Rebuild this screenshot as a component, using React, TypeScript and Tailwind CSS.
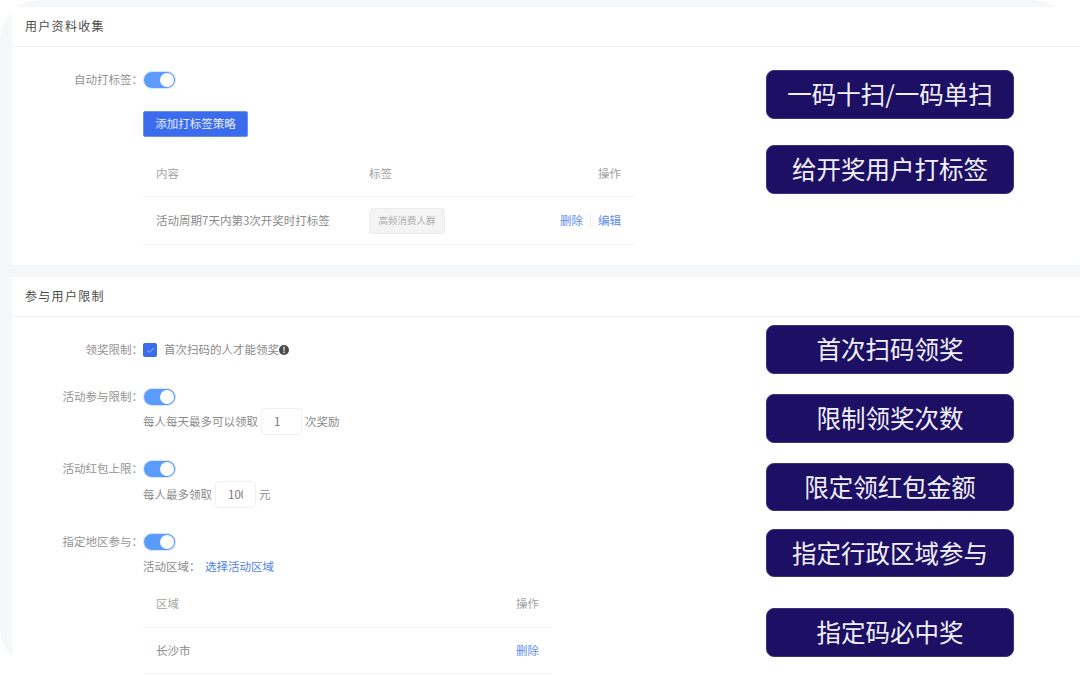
import React from 'react';
import { Check } from 'lucide-react';

const font = "font-['PingFang_SC','Noto_Sans_CJK_SC',sans-serif]";

const Toggle = () => (
  <div className="flex h-[18px] w-[33px] items-center justify-end rounded-full border border-[#d5e4fe] bg-[#5b9bfb] pr-[1px]">
    <div className="h-[14px] w-[14px] rounded-full bg-white" />
  </div>
);

const CardHeader = ({ title }: { title: string }) => (
  <div className="flex h-[40px] items-center border-b border-[#f0f1f3] pb-[2px] pl-[13px] text-[12px] tracking-[1.3px] text-[#4a4a4a]">
    {title}
  </div>
);

const Label = ({ text }: { text: string }) => (
  <span className="w-[131px] shrink-0 whitespace-nowrap text-right text-[11.5px] text-[#939393]">{text}：</span>
);

const NumberBox = ({ value }: { value: string }) => (
  <div className="flex h-[27px] w-[41px] items-center rounded-[4px] border border-[#eef0f2] pl-[12px] text-[11.5px] text-[#777]">
    <span className="w-[15px] overflow-hidden whitespace-nowrap">{value}</span>
  </div>
);

const notes = [
  { text: '一码十扫/一码单扫', margin: 'mt-[70px] h-[49px]' },
  { text: '给开奖用户打标签', margin: 'mt-[26px] h-[49px]' },
  { text: '首次扫码领奖', margin: 'mt-[131px] h-[49px]' },
  { text: '限制领奖次数', margin: 'mt-[20px] h-[49px]' },
  { text: '限定领红包金额', margin: 'mt-[20px] h-[48px]' },
  { text: '指定行政区域参与', margin: 'mt-[18px] h-[48px]' },
  { text: '指定码必中奖', margin: 'mt-[31px] h-[49px]' },
];

export default function App() {
  return (
    <div className={`relative h-[677px] w-[1080px] overflow-hidden bg-white ${font}`}>
      <div className="h-[668px] w-[1080px] rounded-tl-[40px] rounded-tr-[50px] rounded-bl-[40px] bg-[#f5f7f9] pl-[12px] pt-[7px]">
        {/* 用户资料收集 */}
        <div className="h-[258px] w-[1068px] bg-white">
          <CardHeader title="用户资料收集" />
          <div className="mt-[24px] flex h-[18px] items-center">
            <Label text="自动打标签" />
            <Toggle />
          </div>
          <div className="ml-[131px] mt-[22px] flex h-[26px] w-[105px] items-center justify-center rounded-[2px] border border-[#6a92f5] bg-[#3b6ced] text-[11.5px] text-[#e8eefc]">
            添加打标签策略
          </div>
          <div className="ml-[131px] mt-[14px] w-[492px] text-[11.5px]">
            <div className="flex h-[46px] items-center border-b border-[#f3f4f5] pl-[13px] pr-[14px] text-[#a3a3a3]">
              <span className="w-[213px]">内容</span>
              <span>标签</span>
              <span className="ml-auto">操作</span>
            </div>
            <div className="flex h-[48px] items-center border-b border-[#f3f4f5] pl-[13px] pr-[14px] text-[#8a8a8a]">
              <span className="w-[213px]">活动周期7天内第3次开奖时打标签</span>
              <span className="flex h-[26px] w-[76px] items-center justify-center rounded-[3px] border border-[#eeeeee] bg-[#f4f4f4] text-[9.5px] text-[#b0b0b0]">
                高频消费人群
              </span>
              <span className="ml-auto flex items-center text-[#5b8bf0]">
                删除
                <span className="mx-[7px] h-[12px] w-px bg-[#eeeeee]" />
                编辑
              </span>
            </div>
          </div>
        </div>

        {/* 参与用户限制 */}
        <div className="mt-[12px] h-[400px] w-[1068px] bg-white">
          <CardHeader title="参与用户限制" />
          <div className="mt-[26px] flex h-[14px] items-center">
            <Label text="领奖限制" />
            <div className="flex h-[14px] w-[14px] items-center justify-center rounded-[2px] bg-[#3b6ced]">
              <Check className="h-[9px] w-[9px] text-[#c9d8fb]" strokeWidth={2} />
            </div>
            <span className="ml-[7px] text-[11.5px] text-[#8a8a8a]">首次扫码的人才能领奖</span>
            <span className="flex h-[10px] w-[10px] items-center justify-center rounded-full bg-[#4a4a4a] text-[8px] font-bold leading-none text-white">!</span>
          </div>

          <div className="mt-[31px] flex h-[18px] items-center">
            <Label text="活动参与限制" />
            <Toggle />
          </div>
          <div className="ml-[131px] mt-[2px] flex h-[27px] items-center gap-[3px] text-[11.5px] text-[#8a8a8a]">
            每人每天最多可以领取
            <NumberBox value="1" />
            次奖励
          </div>

          <div className="mt-[25px] flex h-[18px] items-center">
            <Label text="活动红包上限" />
            <Toggle />
          </div>
          <div className="ml-[131px] mt-[3px] flex h-[27px] items-center gap-[3px] text-[11.5px] text-[#8a8a8a]">
            每人最多领取
            <NumberBox value="100" />
            元
          </div>

          <div className="mt-[25px] flex h-[18px] items-center">
            <Label text="指定地区参与" />
            <Toggle />
          </div>
          <div className="ml-[131px] mt-[8px] flex h-[16px] items-center text-[11.5px] text-[#8a8a8a]">
            <span className="w-[62px]">活动区域：</span>
            <span className="text-[#4d82ee]">选择活动区域</span>
          </div>
          <div className="ml-[131px] mt-[6px] w-[409px] text-[11.5px]">
            <div className="flex h-[47px] items-center justify-between border-b border-[#f3f4f5] px-[13px] text-[#a3a3a3]">
              <span>区域</span>
              <span>操作</span>
            </div>
            <div className="flex h-[46px] items-center justify-between border-b border-[#f3f4f5] px-[13px] text-[#8a8a8a]">
              <span>长沙市</span>
              <span className="text-[#5b8bf0]">删除</span>
            </div>
          </div>
        </div>
      </div>

      {/* 右侧标注 */}
      <div className="absolute left-[766px] top-0 flex w-[248px] flex-col">
        {notes.map(note => (
          <div
            key={note.text}
            className={`flex items-center justify-center rounded-[8px] border border-[#3c2f7d] bg-[#1d0f63] text-[24.5px] text-[#f2f1f8] ${note.margin}`}
          >
            {note.text}
          </div>
        ))}
      </div>
    </div>
  );
}
